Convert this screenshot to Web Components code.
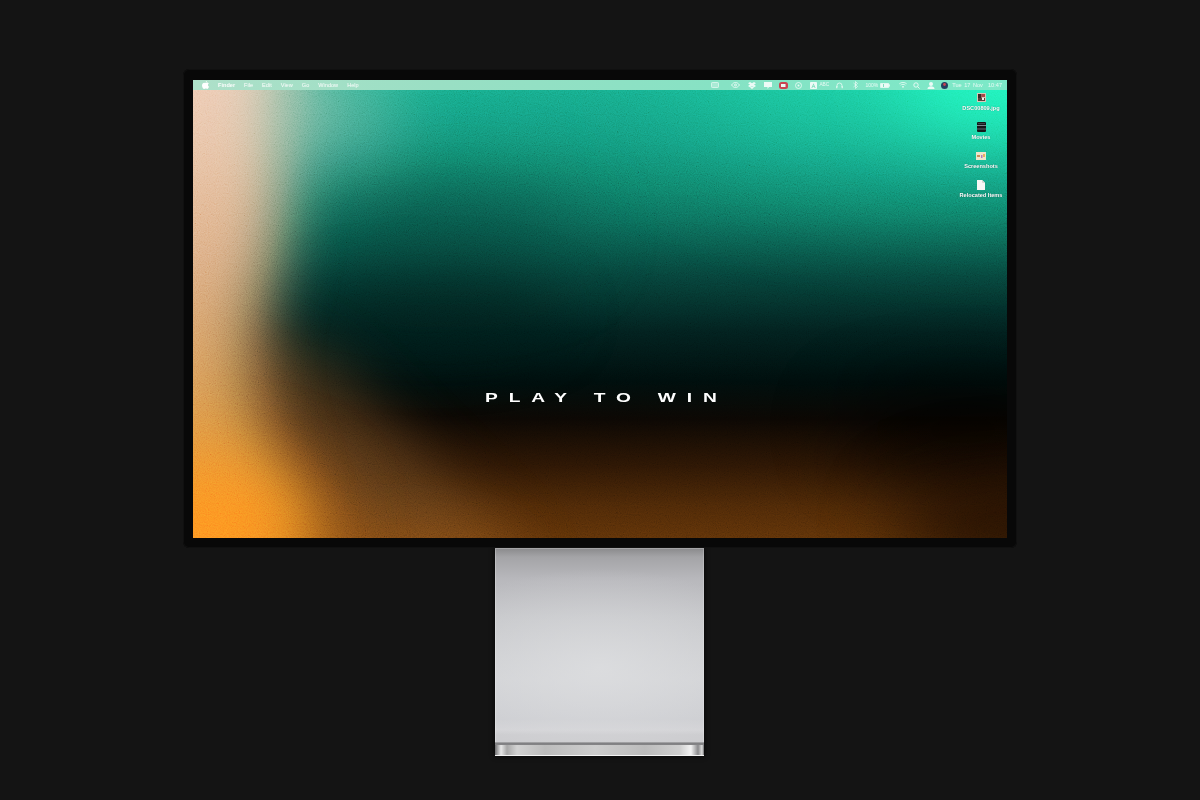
<!DOCTYPE html>
<html lang="en">
<head>
<meta charset="utf-8">
<title>Play to win</title>
<style>
  html, body { margin: 0; height: 100%; background: #141414; overflow: hidden; }
  body { display: flex; flex-direction: column; align-items: center; padding-top: 69px; box-sizing: border-box; font-family: "Liberation Sans", Arial, sans-serif; }
</style>
</head>
<body>
<monitor-display>
  <mac-menubar></mac-menubar>
  <desktop-icon slot="icons" label="DSC00809.jpg" kind="photo"></desktop-icon>
  <desktop-icon slot="icons" label="Movies" kind="film"></desktop-icon>
  <desktop-icon slot="icons" label="Screenshots" kind="shots"></desktop-icon>
  <desktop-icon slot="icons" label="Relocated Items" kind="doc"></desktop-icon>
</monitor-display>
<monitor-stand></monitor-stand>

<script>
class MonitorDisplay extends HTMLElement {
  constructor() {
    super();
    this.attachShadow({ mode: 'open' });
    this.shadowRoot.innerHTML = `
      <style>
        :host {
          display: block;
          position: relative;
          z-index: 1;
          width: 834px;
          height: 479px;
          box-sizing: border-box;
          padding: 11px 10px 10px;
          background: #080808;
          border-radius: 6px;
          box-shadow: inset 0 0 0 1px #101010;
        }
        .screen { position: relative; height: 458px; overflow: hidden; background: #02211e; }
        .wash, .grain { position: absolute; inset: 0; width: 100%; height: 100%; }
        .grain { mix-blend-mode: overlay; opacity: .22; }
        .icons {
          position: absolute;
          top: 12px;
          right: 0;
          width: 52px;
          display: flex;
          flex-direction: column;
          align-items: center;
          gap: 5px;
        }
        .slogan {
          position: absolute;
          left: 292px;
          top: 311px;
          color: #fff;
          font: 700 13.5px/14px "Liberation Sans", Arial, sans-serif;
          letter-spacing: 7.65px;
          white-space: pre;
          transform: scaleX(1.42);
          transform-origin: 0 0;
        }
      </style>
      <div class="screen">
        <svg class="wash" viewBox="0 0 814 458" preserveAspectRatio="none" aria-hidden="true">
          <defs>
            <linearGradient id="sky" x1="0" y1="0" x2="0" y2="1">
              <stop offset="0" stop-color="#17ab89"/>
              <stop offset=".14" stop-color="#139478"/>
              <stop offset=".3" stop-color="#0c6b59"/>
              <stop offset=".43" stop-color="#063f37"/>
              <stop offset=".55" stop-color="#021f1d"/>
              <stop offset=".66" stop-color="#000d0c"/>
              <stop offset=".74" stop-color="#0b0703"/>
              <stop offset=".84" stop-color="#2a1504"/>
              <stop offset=".93" stop-color="#4a2707"/>
              <stop offset="1" stop-color="#5a3008"/>
            </linearGradient>
            <linearGradient id="side" x1="0" y1="0" x2="0" y2="1">
              <stop offset="0" stop-color="#f7d3c3"/>
              <stop offset=".25" stop-color="#eac4a8"/>
              <stop offset=".5" stop-color="#d6a272"/>
              <stop offset=".72" stop-color="#dc923f"/>
              <stop offset="1" stop-color="#ff8f1e"/>
            </linearGradient>
            <filter id="b70" filterUnits="userSpaceOnUse" x="-400" y="-400" width="1600" height="1300" color-interpolation-filters="sRGB"><feGaussianBlur stdDeviation="70"/></filter>
            <filter id="b40" filterUnits="userSpaceOnUse" x="-400" y="-400" width="1600" height="1300" color-interpolation-filters="sRGB"><feGaussianBlur stdDeviation="40"/></filter>
            <filter id="b30" filterUnits="userSpaceOnUse" x="-400" y="-400" width="1600" height="1300" color-interpolation-filters="sRGB"><feGaussianBlur stdDeviation="30"/></filter>
          </defs>
          <rect width="814" height="458" fill="url(#sky)"/>
          <ellipse cx="800" cy="-10" rx="300" ry="90" fill="#22ffc2" opacity=".55" filter="url(#b70)"/>
          <ellipse cx="814" cy="0" rx="110" ry="46" fill="#22ffc2" filter="url(#b40)"/>
          <ellipse cx="250" cy="150" rx="140" ry="50" fill="#053a33" opacity=".5" filter="url(#b40)"/>
          <ellipse cx="240" cy="236" rx="130" ry="36" fill="#001a17" opacity=".6" filter="url(#b30)"/>
          <ellipse cx="770" cy="350" rx="120" ry="36" fill="#000" opacity=".85" filter="url(#b40)"/>
          <ellipse cx="820" cy="450" rx="120" ry="50" fill="#120600" opacity=".8" filter="url(#b40)"/>
          <path d="M40 250L125 275L260 410L340 490H-20z" fill="#6e4a24" opacity=".6" filter="url(#b30)"/>
          <path d="M-120 -120H95C100 60 92 160 66 230C56 290 62 340 90 400L120 560H-120z" fill="url(#side)" filter="url(#b30)"/>
          <ellipse cx="10" cy="450" rx="120" ry="65" fill="#ff8f1e" filter="url(#b40)"/>
          <ellipse cx="200" cy="485" rx="130" ry="30" fill="#b8620f" opacity=".45" filter="url(#b30)"/>
          <ellipse cx="125" cy="30" rx="70" ry="55" fill="#b6c8ba" opacity=".5" filter="url(#b40)"/>
        </svg>
        <svg class="grain" aria-hidden="true">
          <filter id="n" x="0" y="0" width="100%" height="100%"><feTurbulence type="fractalNoise" baseFrequency=".9" numOctaves="2" seed="4"/><feColorMatrix values=".8 .8 0 0 -.3  .8 .8 0 0 -.3  .8 .8 0 0 -.3  0 0 0 0 1"/></filter>
          <rect width="100%" height="100%" filter="url(#n)"/>
        </svg>
        <slot></slot>
        <div class="icons"><slot name="icons"></slot></div>
        <div class="slogan">PLAY TO WIN</div>
      </div>
    `;
  }
}

class MacMenubar extends HTMLElement {
  constructor() {
    super();
    this.attachShadow({ mode: 'open' });
    this.shadowRoot.innerHTML = `
      <style>
        :host {
          position: relative;
          display: flex;
          align-items: center;
          height: 10px;
          padding: 0 5px 0 9px;
          background: linear-gradient(90deg, #aee0c9 0, #9adfc4 30%, #86e2c4 65%, #7ce9c8 100%);
          color: rgba(255,255,255,.85);
          font: 400 5.6px/10px "Liberation Sans", Arial, sans-serif;
          text-shadow: 0 0 1px rgba(255,255,255,.3);
          white-space: nowrap;
        }
        nav { display: flex; align-items: center; gap: 9px; }
        .tray { margin-left: auto; display: flex; align-items: center; opacity: .85; }
        svg { display: block; flex: none; }
        b { font-weight: 700; }
      </style>
      <nav>
        <svg width="7" height="8" viewBox="0 0 14 16" fill="#fff"><path d="M10 0c.1 1.300-1.100 3-2.900 3C7 1.600 8.400.200 10 0zM7.200 4c.8 0 1.800-.800 3.200-.800 1 0 2.400.500 3.200 1.800-2.600 1.600-2.200 5.200.4 6.300-.7 1.800-2.100 4.700-3.700 4.700-1.200 0-1.600-.8-3-.8s-1.900.8-3 .8C2.500 16 0 12.500 0 9c0-3.500 2.300-5.700 4.400-5.700 1.200 0 2.100.7 2.800.7z"/></svg>
        <b>Finder</b><span>File</span><span>Edit</span><span>View</span><span>Go</span><span>Window</span><span>Help</span>
      </nav>
      <div class="tray">
        <svg width="8" height="6" viewBox="0 0 8 6" style="margin-right:12px"><rect x=".5" y=".5" width="7" height="5" rx=".8" fill="rgba(255,255,255,.35)" stroke="#fff" stroke-width=".7"/></svg>
        <svg width="9" height="6" viewBox="0 0 9 6" style="margin-right:8px" fill="none" stroke="#fff" stroke-width=".9"><path d="M.5 3C2 1 3.200.5 4.500.5S7 1 8.500 3C7 5 5.800 5.500 4.500 5.500S2 5 .5 3z"/><circle cx="4.500" cy="3" r="1"/></svg>
        <svg width="8" height="7" viewBox="0 0 8 7" style="margin-right:8px" fill="#fff"><path d="M2 0l2 1.300L6 0l2 1.300-2 1.300 2 1.300-2 1.300-2-1.300-2 1.300-2-1.300 2-1.300L0 1.300zM2 5.600L4 4.500l2 1.100L4 7z"/></svg>
        <svg width="8" height="7" viewBox="0 0 8 7" style="margin-right:7px" fill="#fff"><path d="M0 0h8v5H5L3.500 7V5H0z"/></svg>
        <svg width="9" height="7" viewBox="0 0 9 7" style="margin-right:7px"><rect width="9" height="7" rx="2.500" fill="#d8283f"/><rect x="2" y="2" width="4.500" height="3" fill="#fff"/></svg>
        <svg width="7" height="7" viewBox="0 0 7 7" style="margin-right:8px" fill="none" stroke="#fff" stroke-width=".8"><circle cx="3.500" cy="3.500" r="3"/><circle cx="3.500" cy="3.500" r="1" fill="#fff" stroke="none"/></svg>
        <svg width="7" height="7" viewBox="0 0 7 7" style="margin-right:2px"><rect width="7" height="7" rx=".8" fill="#fff"/><path d="M3.500 1.200L5.600 6H4.700l-.4-1H2.700l-.4 1H1.400zM3 4.200h1L3.500 3z" fill="#7fdcbc"/></svg>
        <span style="margin-right:7px;font-size:4.800px;width:10px">ABC</span>
        <svg width="7" height="7" viewBox="0 0 7 7" style="margin-right:10px" fill="none" stroke="#fff" stroke-width=".8"><path d="M1 5V3.500a2.500 2.500 0 0 1 5 0V5"/><path d="M.8 4.200v2M6.200 4.200v2" stroke-width="1.100"/></svg>
        <svg width="5" height="8" viewBox="0 0 5 8" style="margin-right:7px" fill="none" stroke="#fff" stroke-width=".7"><path d="M.5 2l4 3.500L2.500 7.500V.5l2 2L.5 6"/></svg>
        <span style="margin-right:2px;font-size:5px">100%</span>
        <svg width="10" height="5" viewBox="0 0 10 5" style="margin-right:9px"><rect x=".3" y=".3" width="8.600" height="4.400" rx=".8" fill="#fff" stroke="#fff" stroke-width=".5"/><rect x="9.200" y="1.500" width=".8" height="2" fill="#fff"/><rect x="3" y="1" width="1" height="3" fill="#7fdcbc"/></svg>
        <svg width="8" height="6" viewBox="0 0 8 6" style="margin-right:6px" fill="none" stroke="#fff" stroke-width=".8"><path d="M.3 1.800c2-1.800 5.400-1.800 7.400 0M1.600 3.200c1.300-1.100 3.500-1.100 4.800 0"/><path d="M4 6L2.800 4.500c.7-.5 1.700-.5 2.400 0z" fill="#fff" stroke="none"/></svg>
        <svg width="7" height="7" viewBox="0 0 7 7" style="margin-right:7px" fill="none" stroke="#fff" stroke-width=".9"><circle cx="3" cy="3" r="2.200"/><path d="M4.600 4.600L6.600 6.600"/></svg>
        <svg width="8" height="7" viewBox="0 0 8 7" style="margin-right:6px" fill="#fff"><circle cx="4" cy="2" r="2"/><path d="M.5 7c0-2 1.500-2.800 3.500-2.800S7.500 5 7.500 7z"/></svg>
        <svg width="7" height="7" viewBox="0 0 7 7" style="margin-right:4px"><circle cx="3.500" cy="3.500" r="3.500" fill="#14264f"/><circle cx="3.500" cy="2.500" r="1.400" fill="#d8283f"/></svg>
        <span style="word-spacing:1px">Tue 17 Nov&nbsp; 10:47</span>
      </div>
    `;
  }
}

const ICON_ART = {
  photo: `<svg width="9" height="9" viewBox="0 0 9 9"><rect width="9" height="9" fill="#d8c8b8"/><rect x="1" y="1" width="3.500" height="4" fill="#3a2a28"/><rect x="4.500" y="1" width="3.500" height="3" fill="#a84a48"/><rect x="1" y="5" width="7" height="3" fill="#57433c"/><rect x="5" y="5" width="2" height="2" fill="#f1efe8"/></svg>`,
  film: `<svg width="9" height="10" viewBox="0 0 9 10"><rect width="9" height="10" rx="1" fill="#16181a"/><rect y="3" width="9" height="1" fill="#7a8a90"/><rect y="6.500" width="9" height="1" fill="#5a6a70"/><rect x="1" y="1" width="7" height="1" fill="#3a4448"/></svg>`,
  shots: `<svg width="10" height="8" viewBox="0 0 10 8"><rect width="10" height="8" fill="#f0e6cc"/><rect x="1" y="3" width="3" height="2" fill="#c98f5a"/><rect x="5" y="3" width="1.500" height="3" fill="#b07ec0"/><rect x="7" y="2" width="2" height="3" fill="#e7b35e"/></svg>`,
  doc: `<svg width="8" height="10" viewBox="0 0 8 10"><path d="M0 0h5.200L8 2.800V10H0z" fill="#f7f7f5"/><path d="M5.200 0L8 2.800H5.200z" fill="#cfcfcb"/></svg>`
};

class DesktopIcon extends HTMLElement {
  constructor() {
    super();
    this.attachShadow({ mode: 'open' });
  }

  connectedCallback() {
    const label = this.getAttribute('label');
    const art = ICON_ART[this.getAttribute('kind')];
    this.shadowRoot.innerHTML = `
      <style>
        :host {
          display: flex;
          flex-direction: column;
          align-items: center;
          height: 24px;
          width: 52px;
          color: #fff;
          font: 700 5.600px/6px "Liberation Sans", Arial, sans-serif;
          text-shadow: 0 0 1px rgba(0,0,0,.45);
          white-space: nowrap;
        }
        .art { height: 11px; display: flex; align-items: center; justify-content: center; margin-bottom: 2px; }
        svg { display: block; }
      </style>
      <div class="art">${art}</div>
      <div>${label}</div>
    `;
  }
}

class MonitorStand extends HTMLElement {
  constructor() {
    super();
    this.attachShadow({ mode: 'open' });
    this.shadowRoot.innerHTML = `
      <style>
        :host {
          display: flex;
          flex-direction: column;
          width: 209px;
          height: 208px;
          margin-left: -1px;
          box-sizing: border-box;
          box-shadow: 0 0 5px #050505;
        }
        .neck {
          flex: 1;
          border-top: 1px solid #a4a4a6;
          box-shadow: inset 1px 0 0 rgba(255,255,255,.25), inset -1px 0 0 rgba(255,255,255,.2);
          background:
            radial-gradient(ellipse 190px 100px at 50% 62%, rgba(222,223,225,.8), rgba(222,223,225,0) 100%),
            linear-gradient(180deg, #8c8c8e 0, #a4a4a7 8px, #b8b8bc 30px, #c5c6c9 70px, #d0d1d4 130px, #cbccd0 170px, #d3d3d6 181px, #cbcbce 186px);
        }
        .groove { height: 3px; background: linear-gradient(180deg, #b0b0b2, #77777a 60%, #8c8c8e); }
        .foot {
          height: 10px;
          border-bottom: 1px solid #f4f4f4;
          background:
            linear-gradient(90deg, #6e6e70 0, #e8e8e8 6px, #a8a8a8 12px, #d2d2d2 22px, #bcbcbc 50px, #cdcdcd 100px, #bcbcbc 150px, #cfcfcf 185px, #f2f2f2 196px, #8a8a8c 203px, #dcdcdc 207px, #6e6e70 209px);
        }
      </style>
      <div class="neck"></div>
      <div class="groove"></div>
      <div class="foot"></div>
    `;
  }
}

customElements.define('monitor-display', MonitorDisplay);
customElements.define('mac-menubar', MacMenubar);
customElements.define('desktop-icon', DesktopIcon);
customElements.define('monitor-stand', MonitorStand);
</script>
</body>
</html>
